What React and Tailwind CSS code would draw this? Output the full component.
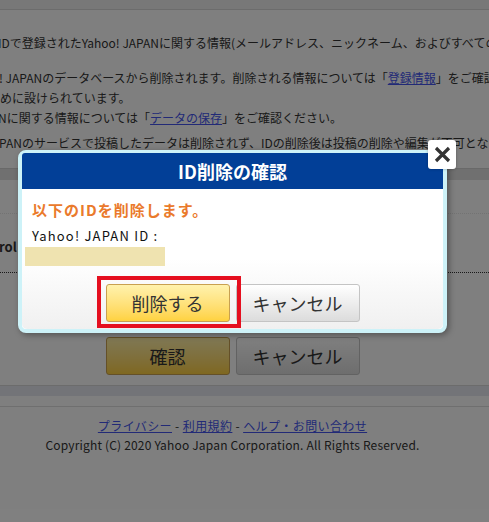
export default function App() {
  return (
    <div
      className="relative w-[489px] h-[522px] overflow-hidden bg-white text-[12px] text-[#333] font-['Noto_Sans_CJK_JP',sans-serif]"
    >
      {/* Page underneath */}
      <div className="h-[10px] bg-[#f0f0f0] border-b border-[#d8d8d8]" />
      <div className="whitespace-nowrap leading-[20px] overflow-hidden pt-[23px]">
        <div className="-ml-[2px]">IDで登録されたYahoo! JAPANに関する情報(メールアドレス、ニックネーム、およびすべての</div>
        <div className="mt-[15px] -ml-[1px]">
          ! JAPANのデータベースから削除されます。削除される情報については「
          <span className="text-[#4455ee] underline">登録情報</span>」をご確認
        </div>
        <div>めに設けられています。</div>
        <div className="-ml-[2px]">
          Nに関する情報については「<span className="text-[#4455ee] underline">データの保存</span>」をご確認ください。
        </div>
        <div className="mt-[5px] -ml-[1px]">PANのサービスで投稿したデータは削除されず、IDの削除後は投稿の削除や編集が不可とな</div>
      </div>
      <div className="mt-[15px] h-[12px] bg-[#e0e0e0] border-t border-[#d2d2d2]" />
      <div className="h-[33px]" />
      <div className="border-t border-[#e6e6e6] h-[60px] flex items-center border-b border-dotted border-b-[#333]">
        <span className="-ml-[1px] font-bold text-[13px] mt-[8px]">rol</span>
      </div>
      <div className="w-[465px] flex justify-center gap-[6px] mt-[64px]">
        <div className="w-[124px] h-[38px] rounded-[3px] border border-[#c8a050] bg-gradient-to-b from-[#fff0a8] to-[#ffd040] flex items-center justify-center text-[18px] text-[#333]">
          確認
        </div>
        <div className="w-[124px] h-[38px] rounded-[3px] border border-[#c4c4c4] bg-gradient-to-b from-[#ffffff] to-[#dcdcdc] flex items-center justify-center text-[18px] text-[#333]">
          キャンセル
        </div>
      </div>
      <div className="mt-[10px] border-t border-[#d8d8d8] h-[11px] bg-[#e6e8f0]" />
      <div className="h-[11px] border-b border-[#dedede]" />
      <div className="w-[465px] flex flex-col items-center pt-[9px] leading-[19px]">
        <div className="tracking-[0.4px]">
          <span className="text-[#4455ee] underline">プライバシー</span> - <span className="text-[#4455ee] underline">利用規約</span> - <span className="text-[#4455ee] underline">ヘルプ・お問い合わせ</span>
        </div>
        <div className="tracking-[0.18px]">Copyright (C) 2020 Yahoo Japan Corporation. All Rights Reserved.</div>
      </div>

      {/* Overlay */}
      <div className="absolute inset-0 bg-black/50" />

      {/* Dialog */}
      <div className="absolute left-[18px] top-[150px] w-[429px] rounded-[8px] border-x-[4px] border-t-[3px] border-b-[4px] border-[#cdf2f8] shadow-[2px_2px_6px_rgba(0,0,0,0.35)] bg-white">
        <div className="h-[36px] bg-[#023f97] rounded-t-[3px] flex items-center justify-center text-white font-bold text-[18px]">
          ID削除の確認
        </div>
        <div className="h-[140px] bg-gradient-to-b from-white via-white to-[#f0f0f0] px-[10px] pt-[11px] rounded-b-[5px]">
          <div className="leading-[20px] text-[15px] font-bold tracking-[1px] text-[#ea7a2c]">以下のIDを削除します。</div>
          <div className="mt-[7px] leading-[18px] text-[13px] tracking-[1.2px] text-[#111]">Yahoo! JAPAN ID :</div>
          <div className="mt-[2px] -ml-[7px] w-[140px] h-[19px] bg-[#efe3b0]" />
          <div className="mt-[18px] flex justify-center gap-[6px]">
            <div className="relative">
              <div className="w-[124px] h-[38px] rounded-[3px] border border-[#c8a050] bg-gradient-to-b from-[#fff2ac] to-[#ffd23e] flex items-center justify-center text-[18px] text-[#333]">
                削除する
              </div>
              <div className="absolute -left-[9px] -top-[8px] -right-[11px] -bottom-[6px] border-[4px] border-[#e50f1f] z-10" />
            </div>
            <div className="w-[124px] h-[38px] rounded-[3px] border border-[#c4c4c4] bg-gradient-to-b from-[#ffffff] to-[#dcdcdc] flex items-center justify-center text-[18px] text-[#333]">
              キャンセル
            </div>
          </div>
        </div>
        <div className="absolute left-[406px] -top-[13px] w-[28px] h-[29px] rounded-[3px] bg-white shadow-[0_0_3px_rgba(0,0,0,0.3)] flex items-center justify-center">
          <svg width="17" height="17" viewBox="0 0 17 17">
            <path d="M2 2 L15 15 M15 2 L2 15" stroke="#333" strokeWidth="3.2" strokeLinecap="butt" />
          </svg>
        </div>
      </div>
    </div>
  );
}
